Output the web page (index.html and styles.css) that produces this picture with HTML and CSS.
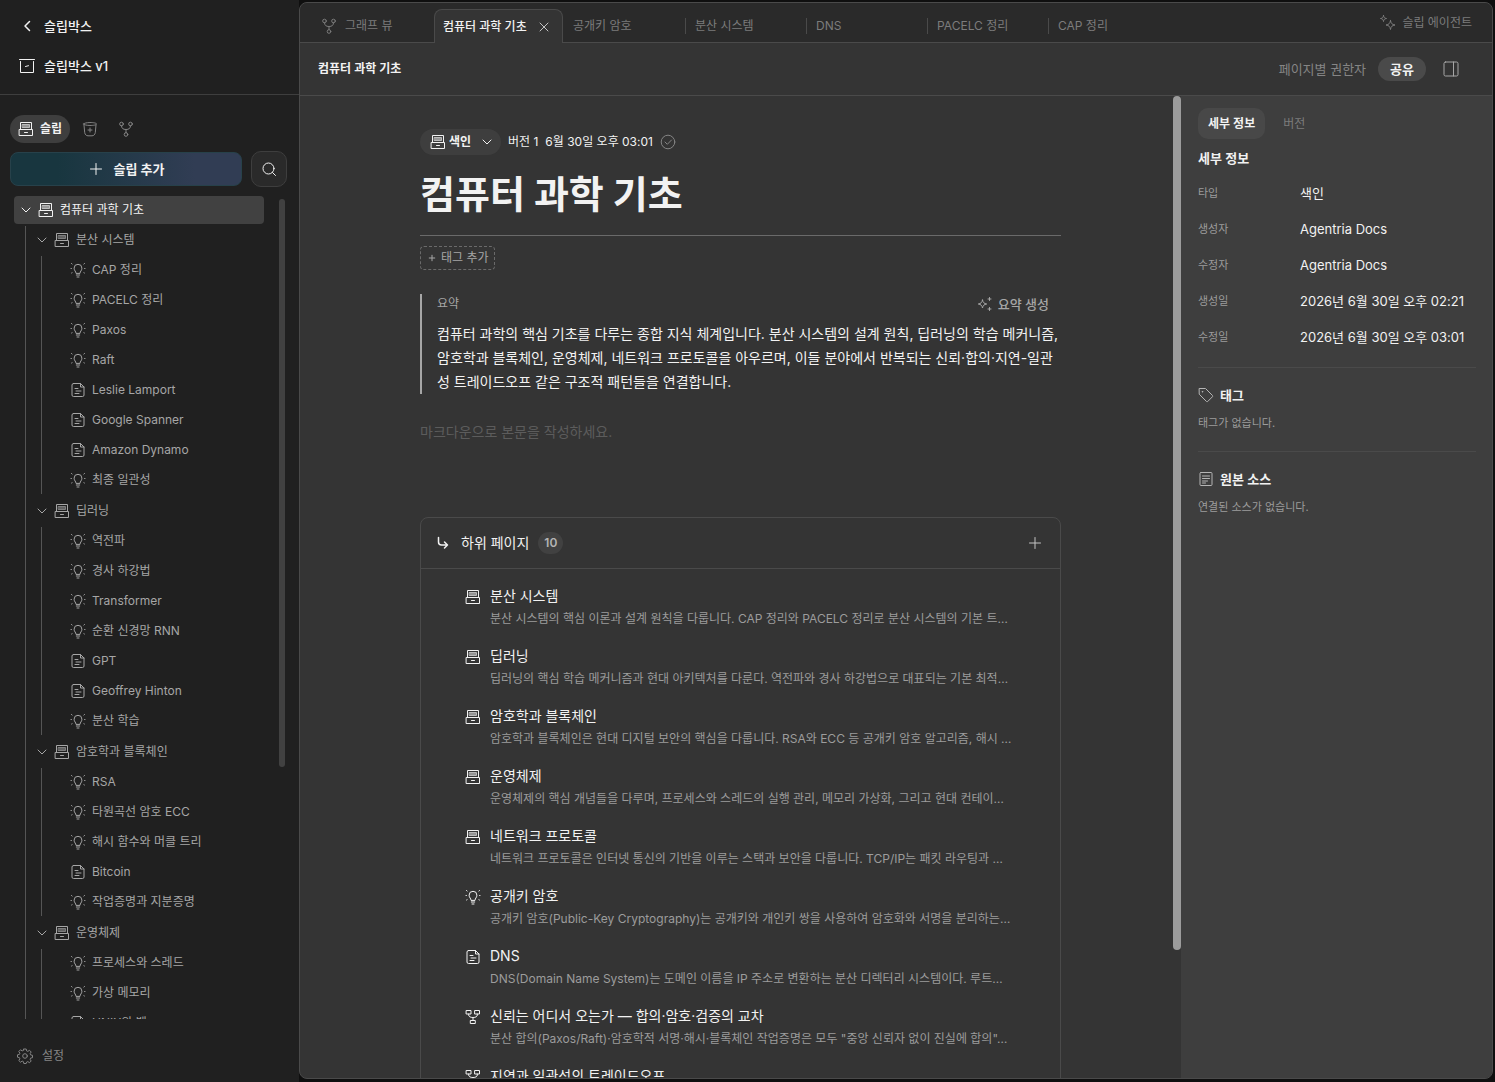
FILE: index.html
```
<!DOCTYPE html>
<html lang="ko">
<head>
    <meta charset="UTF-8">
    <meta name="viewport" content="width=device-width, initial-scale=1.0">
    <title>컴퓨터 과학 기초 - 슬립박스</title>
    <link rel="stylesheet" href="styles.css">
</head>
<body>
    <!-- Icon set -->
    <svg class="icon-defs" aria-hidden="true">
        <symbol id="i-box" viewBox="0 0 16 16"><path d="M0.5 1.5h15M1.5 3.5v11h13v-11M6.500 8.500l3-.8"/></symbol>
        <symbol id="i-back" viewBox="0 0 16 16"><path d="M10.500 3.500 6 8l4.500 4.500" stroke-width="1.500"/></symbol>
        <symbol id="i-chevron" viewBox="0 0 12 12"><path d="M2 4l4 4 4-4"/></symbol>
        <symbol id="i-index" viewBox="0 0 16 16"><path d="M2.500 8V1.500h11V8M1.500 8.500h13v6h-13zM6.500 11.500h3"/><rect x="4.500" y="3.500" width="7" height="3" fill="currentColor" fill-opacity=".5" stroke-opacity=".6"/></symbol>
        <symbol id="i-idea" viewBox="0 0 16 16"><path d="M6 11c0-1.700-1.900-2.300-1.900-4.800a3.900 3.900 0 0 1 7.800 0c0 2.500-1.900 3.100-1.900 4.800zM6.300 13h3.400M7 15h2M1.500 1.500l.6.500M14.500 1.500l-.6.5M1 6.500h.4M14.600 6.500h.4M1.600 11l.5-.3M14.400 11l-.5-.3"/></symbol>
        <symbol id="i-doc" viewBox="0 0 16 16"><path d="M3.500 1.500h7l3.500 3.500v8a1.500 1.500 0 0 1-1.500 1.500h-9A1.500 1.500 0 0 1 2 13V3a1.500 1.500 0 0 1 1.500-1.500zM10.500 1.500V5H14M5 6.500h3M6 9h5M5 11.500h4"/></symbol>
        <symbol id="i-fork" viewBox="0 0 16 16"><circle cx="3.500" cy="3" r="1.800"/><circle cx="12.500" cy="3" r="1.800"/><circle cx="8" cy="13.500" r="1.800"/><path d="M3.500 4.800c0 2.500 1.500 3.700 4.500 3.700s4.500-1.200 4.500-3.700M8 8.500v3.200"/></symbol>
        <symbol id="i-merge" viewBox="0 0 16 16"><path d="M1.500 1.500h4.500v3.500H1.500zM10 1.500h4.500v3.500H10zM5.700 11.500h4.600v3H5.700zM3.700 5v1c0 1.500 1.500 2.500 4.300 2.500s4.300-1 4.300-2.500V5M8 8.500v3"/></symbol>
        <symbol id="i-bucket" viewBox="0 0 16 16"><path d="M1.500 3c0-2 13-2 13 0s-13 2-13 0zM2 4l.7 7.500c.3 2 1.500 3.300 3.300 3.300h4c1.800 0 3-1.300 3.300-3.300L14 4M8 7v4M6 9h4"/></symbol>
        <symbol id="i-plus" viewBox="0 0 16 16"><path d="M8 2.500v11M2.500 8h11"/></symbol>
        <symbol id="i-search" viewBox="0 0 16 16"><circle cx="7.500" cy="7.500" r="5.500"/><path d="M11.500 11.500l3 3"/></symbol>
        <symbol id="i-close" viewBox="0 0 12 12"><path d="M2 2l8 8M10 2l-8 8"/></symbol>
        <symbol id="i-agent" viewBox="0 0 16 16"><path d="M10.500 5.500c.5 3 1.500 4 4.500 4.500-3 .5-4 1.500-4.500 4.500-.5-3-1.500-4-4.500-4.500 3-.5 4-1.500 4.500-4.500zM3.500.5c.3 2 1 2.700 3 3-2 .3-2.700 1-3 3-.3-2-1-2.700-3-3 2-.3 2.700-1 3-3z"/></symbol>
        <symbol id="i-sparkle" viewBox="0 0 16 16"><path d="M5.500 4c.6 2.700 1.500 3.500 4.200 4-2.700.5-3.600 1.300-4.200 4C4.900 9.300 4 8.500 1.300 8c2.700-.5 3.600-1.300 4.200-4zM12.500 1.500v3M11 3h3M12.500 11.500v3M11 13h3"/></symbol>
        <symbol id="i-panel" viewBox="0 0 16 16"><rect x="1" y="1" width="14" height="14" rx="1.500"/><path d="M10.500 1v14"/></symbol>
        <symbol id="i-check" viewBox="0 0 16 16"><circle cx="8" cy="8" r="6.800"/><path d="M5 8l2.300 2.300L11.500 6"/></symbol>
        <symbol id="i-down-right" viewBox="0 0 16 16"><path d="M3.500 2.500v4.500c0 2 1 3 3 3h6M9.500 7 12.500 10l-3 3" stroke-width="1.500"/></symbol>
        <symbol id="i-tag" viewBox="0 0 16 16"><path d="M1.500 1.500h6l7 7a1 1 0 0 1 0 1.200l-4.800 4.800a1 1 0 0 1-1.200 0l-7-7zM4.500 4.500h.5v.5h-.5z"/></symbol>
        <symbol id="i-source" viewBox="0 0 16 16"><rect x="2" y="1.500" width="12" height="13" rx="1"/><path d="M4.500 5h7M4.500 7.500h7M4.500 10h5M4.500 12h3"/></symbol>
        <symbol id="i-gear" viewBox="0 0 16 16"><path d="M6.800 1h2.400l.4 1.900 1.200.5 1.700-1.100 1.700 1.700-1.100 1.700.5 1.200 1.900.4v2.400l-1.900.4-.5 1.200 1.100 1.700-1.700 1.700-1.700-1.100-1.200.5-.4 1.400H6.800l-.4-1.900-1.200-.5-1.700 1.100-1.700-1.700 1.100-1.700-.5-1.200L.5 9.200V6.800l1.900-.4.5-1.200-1.100-1.700 1.700-1.700 1.700 1.100 1.200-.5z"/><circle cx="8" cy="8" r="2.300"/></symbol>
    </svg>

    <div class="app">
        <aside class="sidebar">
            <header class="sidebar-top">
                <a href="#" class="nav-link"><svg class="icon"><use href="#i-back"/></svg>슬립박스</a>
                <a href="#" class="nav-link"><svg class="icon"><use href="#i-box"/></svg>슬립박스 v1</a>
            </header>

            <div class="mode-tabs">
                <button type="button" class="mode active"><svg class="icon"><use href="#i-index"/></svg>슬립</button>
                <button type="button" class="mode" aria-label="소스"><svg class="icon"><use href="#i-bucket"/></svg></button>
                <button type="button" class="mode" aria-label="그래프"><svg class="icon"><use href="#i-fork"/></svg></button>
            </div>

            <div class="actions">
                <button type="button" class="add-btn"><svg class="icon"><use href="#i-plus"/></svg>슬립 추가</button>
                <button type="button" class="search-btn" aria-label="검색"><svg class="icon"><use href="#i-search"/></svg></button>
            </div>

            <nav class="tree-wrap">
                <ul class="tree">
                    <li>
                        <a href="#" class="row selected"><svg class="chevron"><use href="#i-chevron"/></svg><svg class="icon"><use href="#i-index"/></svg>컴퓨터 과학 기초</a>
                        <ul class="branch">
                            <li class="group">
                                <a href="#" class="row"><svg class="chevron"><use href="#i-chevron"/></svg><svg class="icon"><use href="#i-index"/></svg>분산 시스템</a>
                                <ul class="branch">
                                    <li><a href="#" class="row leaf"><svg class="icon"><use href="#i-idea"/></svg>CAP 정리</a></li>
                                    <li><a href="#" class="row leaf"><svg class="icon"><use href="#i-idea"/></svg>PACELC 정리</a></li>
                                    <li><a href="#" class="row leaf"><svg class="icon"><use href="#i-idea"/></svg>Paxos</a></li>
                                    <li><a href="#" class="row leaf"><svg class="icon"><use href="#i-idea"/></svg>Raft</a></li>
                                    <li><a href="#" class="row leaf"><svg class="icon"><use href="#i-doc"/></svg>Leslie Lamport</a></li>
                                    <li><a href="#" class="row leaf"><svg class="icon"><use href="#i-doc"/></svg>Google Spanner</a></li>
                                    <li><a href="#" class="row leaf"><svg class="icon"><use href="#i-doc"/></svg>Amazon Dynamo</a></li>
                                    <li><a href="#" class="row leaf"><svg class="icon"><use href="#i-idea"/></svg>최종 일관성</a></li>
                                </ul>
                            </li>
                            <li class="group">
                                <a href="#" class="row"><svg class="chevron"><use href="#i-chevron"/></svg><svg class="icon"><use href="#i-index"/></svg>딥러닝</a>
                                <ul class="branch">
                                    <li><a href="#" class="row leaf"><svg class="icon"><use href="#i-idea"/></svg>역전파</a></li>
                                    <li><a href="#" class="row leaf"><svg class="icon"><use href="#i-idea"/></svg>경사 하강법</a></li>
                                    <li><a href="#" class="row leaf"><svg class="icon"><use href="#i-idea"/></svg>Transformer</a></li>
                                    <li><a href="#" class="row leaf"><svg class="icon"><use href="#i-idea"/></svg>순환 신경망 RNN</a></li>
                                    <li><a href="#" class="row leaf"><svg class="icon"><use href="#i-doc"/></svg>GPT</a></li>
                                    <li><a href="#" class="row leaf"><svg class="icon"><use href="#i-doc"/></svg>Geoffrey Hinton</a></li>
                                    <li><a href="#" class="row leaf"><svg class="icon"><use href="#i-idea"/></svg>분산 학습</a></li>
                                </ul>
                            </li>
                            <li class="group">
                                <a href="#" class="row"><svg class="chevron"><use href="#i-chevron"/></svg><svg class="icon"><use href="#i-index"/></svg>암호학과 블록체인</a>
                                <ul class="branch">
                                    <li><a href="#" class="row leaf"><svg class="icon"><use href="#i-idea"/></svg>RSA</a></li>
                                    <li><a href="#" class="row leaf"><svg class="icon"><use href="#i-idea"/></svg>타원곡선 암호 ECC</a></li>
                                    <li><a href="#" class="row leaf"><svg class="icon"><use href="#i-idea"/></svg>해시 함수와 머클 트리</a></li>
                                    <li><a href="#" class="row leaf"><svg class="icon"><use href="#i-doc"/></svg>Bitcoin</a></li>
                                    <li><a href="#" class="row leaf"><svg class="icon"><use href="#i-idea"/></svg>작업증명과 지분증명</a></li>
                                </ul>
                            </li>
                            <li class="group">
                                <a href="#" class="row"><svg class="chevron"><use href="#i-chevron"/></svg><svg class="icon"><use href="#i-index"/></svg>운영체제</a>
                                <ul class="branch">
                                    <li><a href="#" class="row leaf"><svg class="icon"><use href="#i-idea"/></svg>프로세스와 스레드</a></li>
                                    <li><a href="#" class="row leaf"><svg class="icon"><use href="#i-idea"/></svg>가상 메모리</a></li>
                                    <li><a href="#" class="row leaf"><svg class="icon"><use href="#i-doc"/></svg>UNIX와 벨</a></li>
                                </ul>
                            </li>
                        </ul>
                    </li>
                </ul>
                <div class="tree-scroll"></div>
            </nav>

            <footer class="sidebar-foot">
                <a href="#" class="settings"><svg class="icon"><use href="#i-gear"/></svg>설정</a>
            </footer>
        </aside>

        <main class="window">
            <nav class="tabbar">
                <a href="#" class="tab tab-graph"><svg class="icon"><use href="#i-fork"/></svg>그래프 뷰</a>
                <div class="tab tab-active">
                    <a href="#">컴퓨터 과학 기초</a>
                    <button type="button" aria-label="탭 닫기"><svg class="chevron"><use href="#i-close"/></svg></button>
                </div>
                <a href="#" class="tab">공개키 암호</a>
                <a href="#" class="tab divided">분산 시스템</a>
                <a href="#" class="tab divided">DNS</a>
                <a href="#" class="tab divided">PACELC 정리</a>
                <a href="#" class="tab divided">CAP 정리</a>
                <button type="button" class="agent-btn"><svg class="icon"><use href="#i-agent"/></svg>슬립 에이전트</button>
            </nav>

            <header class="page-head">
                <strong class="crumb">컴퓨터 과학 기초</strong>
                <button type="button" class="perm-btn">페이지별 권한자</button>
                <button type="button" class="share-btn">공유</button>
                <button type="button" class="panel-btn" aria-label="패널 전환"><svg class="icon"><use href="#i-panel"/></svg></button>
            </header>

            <div class="content">
                <div class="doc-scroll">
                    <article class="doc">
                        <div class="meta">
                            <div class="type-pill">
                                <svg class="icon"><use href="#i-index"/></svg>
                                <select class="type-select" aria-label="타입">
                                    <option>색인</option>
                                </select>
                                <svg class="chevron"><use href="#i-chevron"/></svg>
                            </div>
                            <span>버전 1</span>
                            <time>6월 30일 오후 03:01</time>
                            <svg class="icon saved"><use href="#i-check"/></svg>
                        </div>

                        <h1>컴퓨터 과학 기초</h1>

                        <button type="button" class="tag-btn"><svg class="icon-xs"><use href="#i-plus"/></svg>태그 추가</button>

                        <section class="summary">
                            <div class="summary-head">
                                <span>요약</span>
                                <button type="button" class="gen-btn"><svg class="icon"><use href="#i-sparkle"/></svg>요약 생성</button>
                            </div>
                            <p>컴퓨터 과학의 핵심 기초를 다루는 종합 지식 체계입니다. 분산 시스템의 설계 원칙, 딥러닝의 학습 메커니즘, 암호학과 블록체인, 운영체제, 네트워크 프로토콜을 아우르며, 이들 분야에서 반복되는 신뢰·합의·지연-일관성 트레이드오프 같은 구조적 패턴들을 연결합니다.</p>
                        </section>

                        <textarea class="editor" aria-label="본문" placeholder="마크다운으로 본문을 작성하세요."></textarea>

                        <section class="children">
                            <header class="children-head">
                                <svg class="icon"><use href="#i-down-right"/></svg>
                                <h2>하위 페이지</h2>
                                <span class="count">10</span>
                                <button type="button" class="child-add" aria-label="하위 페이지 추가"><svg class="icon"><use href="#i-plus"/></svg></button>
                            </header>
                            <ul class="child-list">
                                <li>
                                    <svg class="icon"><use href="#i-index"/></svg>
                                    <div class="child-text"><a href="#">분산 시스템</a><p>분산 시스템의 핵심 이론과 설계 원칙을 다룹니다. CAP 정리와 PACELC 정리로 분산 시스템의 기본 트…</p></div>
                                </li>
                                <li>
                                    <svg class="icon"><use href="#i-index"/></svg>
                                    <div class="child-text"><a href="#">딥러닝</a><p>딥러닝의 핵심 학습 메커니즘과 현대 아키텍처를 다룬다. 역전파와 경사 하강법으로 대표되는 기본 최적…</p></div>
                                </li>
                                <li>
                                    <svg class="icon"><use href="#i-index"/></svg>
                                    <div class="child-text"><a href="#">암호학과 블록체인</a><p>암호학과 블록체인은 현대 디지털 보안의 핵심을 다룹니다. RSA와 ECC 등 공개키 암호 알고리즘, 해시 …</p></div>
                                </li>
                                <li>
                                    <svg class="icon"><use href="#i-index"/></svg>
                                    <div class="child-text"><a href="#">운영체제</a><p>운영체제의 핵심 개념들을 다루며, 프로세스와 스레드의 실행 관리, 메모리 가상화, 그리고 현대 컨테이…</p></div>
                                </li>
                                <li>
                                    <svg class="icon"><use href="#i-index"/></svg>
                                    <div class="child-text"><a href="#">네트워크 프로토콜</a><p>네트워크 프로토콜은 인터넷 통신의 기반을 이루는 스택과 보안을 다룹니다. TCP/IP는 패킷 라우팅과 …</p></div>
                                </li>
                                <li>
                                    <svg class="icon"><use href="#i-idea"/></svg>
                                    <div class="child-text"><a href="#">공개키 암호</a><p>공개키 암호(Public-Key Cryptography)는 공개키와 개인키 쌍을 사용하여 암호화와 서명을 분리하는…</p></div>
                                </li>
                                <li>
                                    <svg class="icon"><use href="#i-doc"/></svg>
                                    <div class="child-text"><a href="#">DNS</a><p>DNS(Domain Name System)는 도메인 이름을 IP 주소로 변환하는 분산 디렉터리 시스템이다. 루트…</p></div>
                                </li>
                                <li>
                                    <svg class="icon"><use href="#i-merge"/></svg>
                                    <div class="child-text"><a href="#">신뢰는 어디서 오는가 — 합의·암호·검증의 교차</a><p>분산 합의(Paxos/Raft)·암호학적 서명·해시·블록체인 작업증명은 모두 "중앙 신뢰자 없이 진실에 합의"…</p></div>
                                </li>
                                <li>
                                    <svg class="icon"><use href="#i-merge"/></svg>
                                    <div class="child-text"><a href="#">지연과 일관성의 트레이드오프</a></div>
                                </li>
                            </ul>
                        </section>
                    </article>
                    <div class="doc-thumb"></div>
                </div>

                <aside class="details">
                    <div class="detail-tabs">
                        <button type="button" class="detail-tab active">세부 정보</button>
                        <button type="button" class="detail-tab">버전</button>
                    </div>
                    <h3>세부 정보</h3>
                    <dl class="props">
                        <dt>타입</dt><dd>색인</dd>
                        <dt>생성자</dt><dd>Agentria Docs</dd>
                        <dt>수정자</dt><dd>Agentria Docs</dd>
                        <dt>생성일</dt><dd>2026년 6월 30일 오후 02:21</dd>
                        <dt>수정일</dt><dd>2026년 6월 30일 오후 03:01</dd>
                    </dl>
                    <section class="detail-block">
                        <h3><svg class="icon"><use href="#i-tag"/></svg>태그</h3>
                        <p>태그가 없습니다.</p>
                    </section>
                    <section class="detail-block">
                        <h3><svg class="icon"><use href="#i-source"/></svg>원본 소스</h3>
                        <p>연결된 소스가 없습니다.</p>
                    </section>
                </aside>
            </div>
        </main>
    </div>
</body>
</html>
```
FILE: styles.css
```
* { box-sizing: border-box; }
body { margin: 0; background: #0f0f0f; color: #f2f2f2; font-family: Inter, "Noto Sans CJK KR", sans-serif; font-size: 13px; line-height: 20px; }
a { color: inherit; text-decoration: none; }
button, select, textarea { font: inherit; color: inherit; background: none; border: none; padding: 0; }
button { cursor: pointer; }
ul, dl, dd, p, h1, h2, h3 { margin: 0; padding: 0; }
ul { list-style: none; }
svg { fill: none; stroke: currentColor; stroke-width: 1; stroke-linecap: round; stroke-linejoin: round; flex: none; }
.icon-defs { position: absolute; width: 0; height: 0; }
.icon { width: 16px; height: 16px; }
.icon-xs { width: 8px; height: 8px; stroke-width: 2; }
.chevron { width: 12px; height: 12px; }

.app { display: flex; height: 100vh; padding: 0 2px 3px 0; }

/* Sidebar */
.sidebar { display: flex; flex-direction: column; width: 299px; flex: none; background: #202020; margin-bottom: -3px; }
.sidebar-top { display: flex; flex-direction: column; gap: 20px; padding: 16px 19px 18px; border-bottom: 1px solid #3e3e3e; }
.nav-link { display: flex; align-items: center; gap: 9px; font-weight: 500; }
.mode-tabs { display: flex; align-items: center; gap: 4px; padding: 20px 10px 8px; }
.mode { display: flex; align-items: center; gap: 6px; height: 28px; padding: 0 8px; border-radius: 14px; color: #858585; }
.mode.active { background: #3e3e3e; color: #f2f2f2; font-size: 12px; font-weight: 600; }
.actions { display: flex; align-items: center; gap: 9px; padding: 0 12px 9px 10px; }
.add-btn { display: flex; align-items: center; justify-content: center; gap: 10px; flex: 1; height: 34px; border: 1px solid #27414a; border-radius: 8px; background: linear-gradient(90deg, #18363f 20%, #313d54 80%); font-weight: 700; }
.search-btn { display: flex; align-items: center; justify-content: center; width: 36px; height: 36px; border: 1px solid #3e3e3e; border-radius: 10px; background: #2a2a2a; }
.tree-wrap { display: flex; justify-content: space-between; flex: 1; min-height: 0; padding: 0 14px; overflow: hidden; }
.tree { width: 250px; }
.tree-scroll { width: 6px; height: 69%; margin-top: 3px; border-radius: 3px; background: #414141; }
.branch { margin-left: 11px; padding-left: 4px; border-left: 1px solid #555; }
.group { padding-bottom: 1px; }
.row { display: flex; align-items: center; gap: 6px; height: 28px; margin-bottom: 2px; padding-left: 6px; border-radius: 4px; color: #a6a6a6; font-size: 12px; white-space: nowrap; }
.row.selected { background: #414141; color: #f2f2f2; }
.row.leaf { padding-left: 24px; }
.sidebar-foot { padding: 27px 17px 16px; }
.settings { display: flex; align-items: center; gap: 9px; color: #858585; font-size: 12px; }

/* Window */
.window { display: flex; flex-direction: column; flex: 1; min-width: 0; margin-top: 2px; border: 1px solid #4a4a4a; border-radius: 8px; background: #343434; overflow: hidden; }
.tabbar { display: flex; height: 40px; flex: none; padding-right: 20px; background: #2a2a2a; border-bottom: 1px solid #4a4a4a; color: #7c7c7c; font-size: 12px; }
.tab { display: flex; align-items: center; width: 122px; height: 34px; margin-top: 6px; padding-left: 10px; white-space: nowrap; }
.tab-graph { width: 134px; gap: 8px; padding-left: 21px; }
.tab-active { justify-content: space-between; width: 129px; padding: 0 12px 0 8px; background: #343434; border: 1px solid #4a4a4a; border-bottom: none; border-radius: 8px 8px 0 0; color: #f2f2f2; font-weight: 500; }
.tab-active button { display: flex; color: #c4c4c4; }
.divided { width: 121px; padding-left: 0; }
.divided::before { content: ""; height: 16px; margin-right: 9px; border-left: 1px solid #4a4a4a; }
.agent-btn { display: flex; align-items: center; gap: 6px; height: 39px; margin-left: auto; white-space: nowrap; }
.page-head { display: flex; align-items: center; height: 53px; flex: none; padding: 0 33px 0 18px; border-bottom: 1px solid #4a4a4a; }
.crumb { margin-right: auto; font-size: 12px; font-weight: 600; }
.perm-btn { color: #858585; }
.share-btn { height: 24px; margin: 0 17px 0 12px; padding: 0 12px; border-radius: 12px; background: #4a4a4a; font-weight: 600; }
.panel-btn { display: flex; color: #a6a6a6; }
.content { display: flex; flex: 1; min-height: 0; }

/* Document */
.doc-scroll { position: relative; flex: 1; min-width: 0; overflow: hidden; }
.doc-thumb { position: absolute; top: 0; right: 0; width: 8px; height: 87%; border-radius: 4px; background: #9c9c9c; }
.doc { max-width: 641px; margin: 0 auto; padding-top: 32px; }
.meta { display: flex; align-items: center; gap: 7px; height: 27px; font-size: 12px; }
.type-pill { display: flex; align-items: center; height: 26px; padding: 0 8px 0 10px; border-radius: 13px; background: #3e3e3e; font-weight: 600; }
.type-select { width: 32px; margin-left: 3px; appearance: none; font-weight: 600; }
.saved { color: #858585; }
h1 { padding: 11px 0 12px; border-bottom: 1px solid #6a6a6a; font-size: 38px; line-height: 57px; font-weight: 700; }
.tag-btn { display: flex; align-items: center; gap: 5px; height: 24px; margin-top: 10px; padding: 0 5px 0 7px; border: 1px dashed #6a6a6a; border-radius: 4px; color: #a6a6a6; font-size: 12px; }
.summary { margin-top: 24px; padding-left: 15px; border-left: 2px solid #a6a6a6; }
.summary-head { display: flex; justify-content: space-between; height: 28px; padding-right: 12px; color: #a6a6a6; font-size: 12px; }
.gen-btn { display: flex; align-items: center; gap: 5px; height: 20px; font-size: 13px; font-weight: 500; }
.summary p { font-size: 14px; line-height: 24px; }
.editor { display: block; width: 100%; height: 96px; margin-top: 27px; resize: none; outline: none; font-size: 14px; line-height: 22px; }
.editor::placeholder { color: #5c5c5c; }
.children { border: 1px solid #4a4a4a; border-radius: 8px; }
.children-head { display: flex; align-items: center; height: 51px; padding: 0 17px 0 14px; border-bottom: 1px solid #4a4a4a; }
.children-head h2 { margin: 0 9px 0 10px; font-size: 14px; font-weight: 400; }
.count { padding: 0 6px; border-radius: 11px; background: #414141; color: #b4b4b4; font-size: 12px; line-height: 22px; font-weight: 600; }
.child-add { display: flex; margin-left: auto; color: #c4c4c4; }
.child-list { padding: 16px 38px 0 44px; }
.child-list li { display: flex; gap: 9px; height: 60px; }
.child-list .icon { margin-top: 4px; }
.child-text { min-width: 0; font-size: 14px; line-height: 22px; white-space: nowrap; }
.child-text p { color: #9c9c9c; font-size: 12px; line-height: 24px; }

/* Details panel */
.details { width: 311px; flex: none; padding: 12px 16px 0 17px; background: #3e3e3e; font-size: 12px; }
.detail-tabs { display: flex; gap: 8px; }
.detail-tab { height: 31px; padding: 0 10px; border-radius: 10px; color: #7c7c7c; }
.detail-tab.active { background: #484848; color: #f2f2f2; font-weight: 600; }
.details h3 { display: flex; align-items: center; gap: 6px; margin-top: 9px; font-size: 13px; font-weight: 600; }
.details h3 .icon { color: #b4b4b4; }
.props { display: grid; grid-template-columns: 102px 1fr; grid-auto-rows: 36px; align-items: center; margin: 7px 0 12px; }
.props dt { color: #9c9c9c; font-size: 11px; }
.props dd { font-size: 13px; white-space: nowrap; }
.detail-block { padding: 8px 0 18px; border-top: 1px solid #4a4a4a; color: #9c9c9c; }
.detail-block h3 { color: #f2f2f2; }
.detail-block p { margin-top: 8px; font-size: 11px; }
```
